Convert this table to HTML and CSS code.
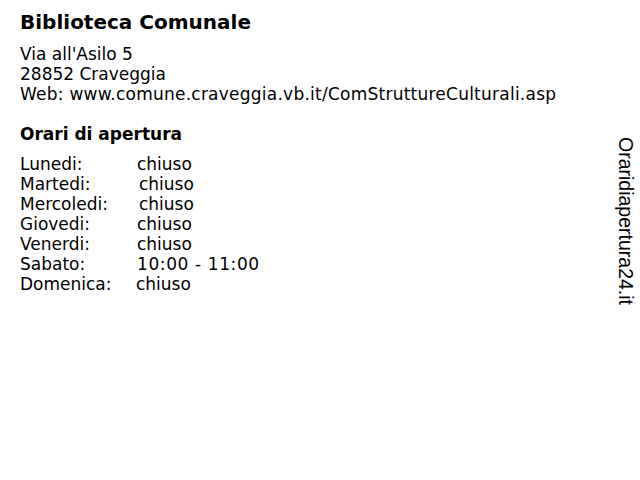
FILE: index.html
```html
<!DOCTYPE html>
<html lang="it">
<head>
<meta charset="utf-8">
<title>Biblioteca Comunale</title>
<link rel="stylesheet" href="styles.css">
</head>
<body>
<div class="page">
  <main class="content">
    <h1 class="title">Biblioteca Comunale</h1>
    <div class="address">
      <div>Via all'Asilo 5</div>
      <div>28852 Craveggia</div>
      <div class="web">Web: www.comune.craveggia.vb.it/ComStruttureCulturali.asp</div>
    </div>
    <h2 class="subtitle">Orari di apertura</h2>
    <div class="hours">
      <span>Lunedi:</span><span>chiuso</span>
      <span>Martedi:</span><span class="shift">chiuso</span>
      <span>Mercoledi:</span><span class="shift">chiuso</span>
      <span>Giovedi:</span><span>chiuso</span>
      <span>Venerdi:</span><span>chiuso</span>
      <span>Sabato:</span><span class="time">10:00 - 11:00</span>
      <span>Domenica:</span><span class="back">chiuso</span>
    </div>
  </main>
  <aside class="brand"><span class="brand-text">Oraridiapertura24.it</span></aside>
</div>
</body>
</html>
```
FILE: styles.css
```css
html, body {
  margin: 0;
  padding: 0;
  background: #ffffff;
}
body {
  font-family: "DejaVu Sans", Verdana, sans-serif;
  color: #000000;
}
.page {
  display: flex;
  width: 640px;
  height: 480px;
}
.content {
  flex: 1;
  padding: 10px 0 0 20px;
}
.title {
  margin: 0;
  font-size: 20px;
  line-height: 24px;
  font-weight: bold;
}
.address {
  margin-top: 10px;
  font-size: 17px;
  line-height: 20px;
}
.web {
  letter-spacing: 0.24px;
}
.subtitle {
  margin: 20px 0 0 0;
  font-size: 17px;
  line-height: 20px;
  font-weight: bold;
}
.hours {
  margin-top: 10px;
  display: grid;
  grid-template-columns: 117px auto;
  font-size: 17px;
  line-height: 20px;
}
.shift { margin-left: 2px; }
.back { margin-left: -1px; }
.time { letter-spacing: 0.6px; }
.brand {
  width: 40px;
  display: flex;
  justify-content: center;
  padding-top: 137px;
}
.brand-text {
  writing-mode: vertical-rl;
  font-family: "Liberation Sans", Arial, sans-serif;
  font-size: 19.5px;
  color: #000000;
  height: max-content;
  margin-left: 10px;
}
```
